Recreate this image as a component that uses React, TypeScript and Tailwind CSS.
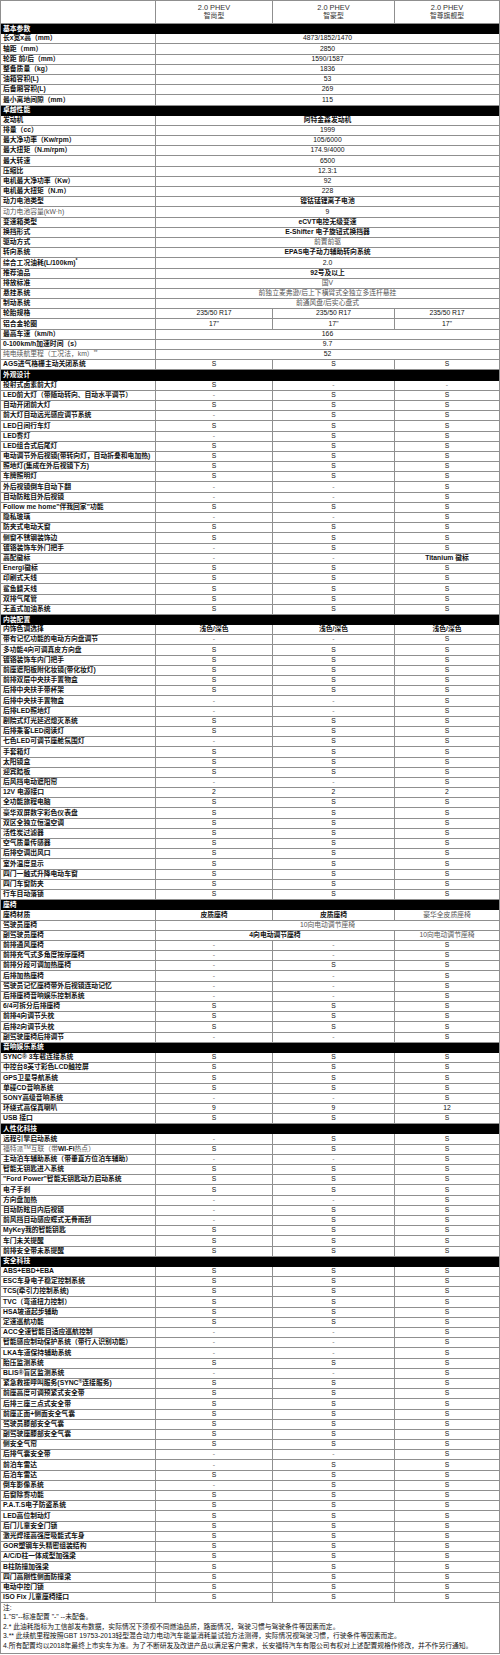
import type { ReactNode } from "react";

type Cell = { text: ReactNode; span: 1 | 2 | 3; light?: boolean };
type Entry =
  | { kind: "sec"; title: string }
  | { kind: "row"; label: ReactNode; cells: Cell[]; lightLabel?: boolean };

const sec = (title: string): Entry => ({ kind: "sec", title });

const all = (label: ReactNode, text: string, opts: { ll?: boolean; lv?: boolean } = {}): Entry => ({
  kind: "row",
  label,
  lightLabel: opts.ll,
  cells: [{ text, span: 3, light: opts.lv }],
});

const three = (label: ReactNode, a: string, b: string, c: string, light3 = false): Entry => ({
  kind: "row",
  label,
  cells: [
    { text: a, span: 1 },
    { text: b, span: 1 },
    { text: c, span: 1, light: light3 },
  ],
});

// "S-S" style shorthand for the S / - columns
const f = (label: ReactNode, p: string, ll = false): Entry => ({
  kind: "row",
  label,
  lightLabel: ll,
  cells: p.split("").map((ch) => ({ text: ch, span: 1 as const })),
});

const rows: Entry[] = [
  sec("基本参数"),
  all("长x宽x高（mm）", "4873/1852/1470"),
  all("轴距（mm）", "2850"),
  all("轮距 前/后（mm）", "1590/1587"),
  all("整备质量（kg）", "1836"),
  all("油箱容积(L)", "53"),
  all("后备厢容积(L)", "269"),
  all("最小离地间隙（mm）", "115"),
  sec("卓越性能"),
  all("发动机", "阿特金森发动机"),
  all("排量（cc）", "1999"),
  all("最大净功率（Kw/rpm）", "105/6000"),
  all("最大扭矩（N.m/rpm）", "174.9/4000"),
  all("最大转速", "6500"),
  all("压缩比", "12.3:1"),
  all("电机最大净功率（Kw）", "92"),
  all("电机最大扭矩（N.m）", "228"),
  all("动力电池类型", "镍钴锰锂离子电池"),
  all("动力电池容量(kW·h)", "9", { ll: true }),
  all("变速箱类型", "eCVT电控无级变速"),
  all("换挡形式", "E-Shifter 电子旋钮式换挡器"),
  all("驱动方式", "前置前驱", { lv: true }),
  all("转向系统", "EPAS电子动力辅助转向系统"),
  all(
    <>
      综合工况油耗(L/100km)<sup>*</sup>
    </>,
    "2.0",
  ),
  all("推荐油品", "92号及以上"),
  all("排放标准", "国V", { lv: true }),
  all("悬挂系统", "前独立麦弗逊/后上下横臂式全独立多连杆悬挂", { lv: true }),
  all("制动系统", "前通风盘/后实心盘式", { lv: true }),
  three("轮胎规格", "235/50 R17", "235/50 R17", "235/50 R17"),
  three("铝合金轮圈", "17''", "17''", "17''"),
  all("最高车速（km/h）", "166"),
  all("0-100km/h加速时间（s）", "9.7"),
  all(
    <>
      纯电续航里程（工况法，km）<sup>**</sup>
    </>,
    "52",
    { ll: true },
  ),
  f("AGS进气格栅主动关闭系统", "SSS"),
  sec("外观设计"),
  f("投射式卤素前大灯", "S--"),
  f("LED前大灯（带随动转向、自动水平调节）", "-SS"),
  f("自动开闭前大灯", "SSS"),
  f("前大灯自动远光感应调节系统", "-SS"),
  f("LED日间行车灯", "SSS"),
  f("LED雾灯", "-SS"),
  f("LED组合式后尾灯", "SSS"),
  f("电动调节外后视镜(带转向灯，自动折叠和电加热)", "SSS"),
  f("照地灯(集成在外后视镜下方)", "SSS"),
  f("车牌照明灯", "SSS"),
  f("外后视镜倒车自动下翻", "--S"),
  f("自动防眩目外后视镜", "--S"),
  f("Follow me home\"伴我回家\"功能", "SSS"),
  f("隐私玻璃", "--S"),
  f("防夹式电动天窗", "SSS"),
  f("侧窗不锈钢装饰边", "SSS"),
  f("镀铬装饰车外门把手", "-SS"),
  three("高配徽标", "-", "-", "Titanium 徽标"),
  f("Energi徽标", "SSS"),
  f("印刷式天线", "SSS"),
  f("鲨鱼鳍天线", "SSS"),
  f("双排气尾管", "SSS"),
  f("无盖式加油系统", "SSS"),
  sec("内装配置"),
  three("内饰色调选择", "浅色/深色", "浅色/深色", "浅色/深色"),
  f("带有记忆功能的电动方向盘调节", "--S"),
  f("多功能4向可调真皮方向盘", "SSS"),
  f("镀铬装饰车内门把手", "SSS"),
  f("前座遮阳板附化妆镜(带化妆灯)", "SSS"),
  f("前排双层中央扶手置物盒", "SSS"),
  f("后排中央扶手带杯架", "SSS"),
  f("后排中央扶手置物盒", "--S"),
  f("后排LED照地灯", "--S"),
  f("剧院式灯光延迟熄灭系统", "SSS"),
  f("后排乘客LED阅读灯", "SSS"),
  f("七色LED可调节座舱氛围灯", "-SS"),
  f("手套箱灯", "SSS"),
  f("太阳镜盒", "SSS"),
  f("迎宾踏板", "SSS"),
  f("后风挡电动遮阳帘", "--S"),
  f("12V 电源接口", "222"),
  f("全功能旅程电脑", "SSS"),
  f("豪华双屏数字彩色仪表盘", "SSS"),
  f("双区全独立恒温空调", "SSS"),
  f("活性炭过滤器", "SSS"),
  f("空气质量传感器", "SSS"),
  f("后排空调出风口", "SSS"),
  f("室外温度显示", "SSS"),
  f("四门一触式升降电动车窗", "SSS"),
  f("四门车窗防夹", "SSS"),
  f("行车自动落锁", "SSS"),
  sec("座椅"),
  three("座椅材质", "皮质座椅", "皮质座椅", "豪华全皮质座椅", true),
  all("驾驶员座椅", "10向电动调节座椅", { lv: true }),
  {
    kind: "row",
    label: "副驾驶员座椅",
    cells: [
      { text: "4向电动调节座椅", span: 2 },
      { text: "10向电动调节座椅", span: 1, light: true },
    ],
  },
  f("前排通风座椅", "--S"),
  f("前排充气式多角度按摩座椅", "--S"),
  f("前排分段可调加热座椅", "-SS"),
  f("后排加热座椅", "--S"),
  f("驾驶员记忆座椅带外后视镜连动记忆", "--S"),
  f("后排座椅音响娱乐控制系统", "--S"),
  f("6/4可拆分后排座椅", "SSS"),
  f("前排4向调节头枕", "SSS"),
  f("后排2向调节头枕", "SSS"),
  f("副驾驶座椅后排调节", "--S"),
  sec("音响娱乐系统"),
  f("SYNC® 3车载连接系统", "SSS"),
  f("中控台8英寸彩色LCD触控屏", "SSS"),
  f("GPS卫星导航系统", "SSS"),
  f("单碟CD音响系统", "SSS"),
  f("SONY高级音响系统", "--S"),
  three("环绕式高保真喇叭", "9", "9", "12"),
  f("USB 接口", "SSS"),
  sec("人性化科技"),
  f("远程引擎启动系统", "-SS"),
  f(
    <>
      福特派<sup>TM</sup>互联（带<span className="font-semibold text-[#111]">WI-Fi</span>热点）
    </>,
    "SSS",
    true,
  ),
  f("主动泊车辅助系统（带垂直方位泊车辅助）", "--S"),
  f("智能无钥匙进入系统", "SSS"),
  f("\"Ford Power\"智能无钥匙动力启动系统", "SSS"),
  f("电子手刹", "SSS"),
  f("方向盘加热", "--S"),
  f("自动防眩目内后视镜", "-SS"),
  f("前风挡自动感应蝶式无骨雨刮", "-SS"),
  f("MyKey我的智能钥匙", "SSS"),
  f("车门未关提醒", "SSS"),
  f("前排安全带未系提醒", "SSS"),
  sec("安全科技"),
  f("ABS+EBD+EBA", "SSS"),
  f("ESC车身电子稳定控制系统", "SSS"),
  f("TCS(牵引力控制系统)", "SSS"),
  f("TVC（弯道扭力控制）", "SSS"),
  f("HSA坡道起步辅助", "SSS"),
  f("定速巡航功能", "SSS"),
  f("ACC全速智能自适应巡航控制", "--S"),
  f("智能感应制动保护系统（带行人识别功能）", "--S"),
  f("LKA车道保持辅助系统", "--S"),
  f("胎压监测系统", "SSS"),
  f("BLIS®盲区监测系统", "--S"),
  f(
    <>
      紧急救援呼叫服务(SYNC<sup>®</sup>连接服务)
    </>,
    "SSS",
  ),
  f("前座高度可调预紧式安全带", "SSS"),
  f("后排三座三点式安全带", "SSS"),
  f("前座正面+侧面安全气囊", "SSS"),
  f("驾驶员膝部安全气囊", "SSS"),
  f("副驾驶座膝部安全气囊", "SSS"),
  f("侧安全气帘", "SSS"),
  f("后排气囊安全带", "--S"),
  f("前泊车雷达", "-SS"),
  f("后泊车雷达", "SSS"),
  f("倒车影像系统", "-SS"),
  f("后窗除雾功能", "SSS"),
  f("P.A.T.S电子防盗系统", "SSS"),
  f("LED高位制动灯", "SSS"),
  f("后门儿童安全门锁", "SSS"),
  f("激光焊接高强度吸能式车身", "SSS"),
  f("GOR塑钢车头精密组装结构", "SSS"),
  f("A/C/D柱一体成型加强梁", "SSS"),
  f("B柱防撞加强梁", "SSS"),
  f("四门高刚性侧面防撞梁", "SSS"),
  f("电动中控门锁", "SSS"),
  f("ISO Fix 儿童座椅接口", "SSS"),
];

const notes = [
  "注:",
  "1.\"S\"--标准配置 \"-\" --未配备。",
  "2.* 此油耗指标为工信部发布数据，实际情况下须视不同燃油品质，路面情况，驾驶习惯与驾驶条件等因素而定。",
  "3.** 此续航里程按照GBT 19753-2013轻型混合动力电动汽车能量消耗量试验方法测得，实际情况视驾驶习惯，行驶条件等因素而定。",
  "4.所有配置均以2018年最终上市实车为准。为了不断研发及改进产品以满足客户需求，长安福特汽车有限公司有权对上述配置规格作修改，并不作另行通知。",
];

const widthFor = (start: number, span: number) => {
  if (start + span === 3) return "flex-1";
  if (start === 0 && span === 1) return "w-[117px] shrink-0 border-r border-[#8f8f8f]";
  if (start === 1 && span === 1) return "w-[122px] shrink-0 border-r border-[#8f8f8f]";
  return "w-[239px] shrink-0 border-r border-[#8f8f8f]";
};

// worded (Chinese) values are set heavier, figures and marks stay regular
const hasCjk = (t: ReactNode) => typeof t === "string" && /[\u4e00-\u9fff]/.test(t);

const DataRow = ({ entry }: { entry: Extract<Entry, { kind: "row" }> }) => {
  let pos = 0;
  return (
    <div className="flex h-[10.2px] border-b border-[#8f8f8f]">
      <div
        className={`flex w-[155px] shrink-0 items-center overflow-hidden whitespace-nowrap border-r border-[#8f8f8f] pl-[2px] ${
          entry.lightLabel ? "font-normal text-[#555]" : "font-semibold text-[#111]"
        }`}
      >
        {entry.label}
      </div>
      {entry.cells.map((c, i) => {
        const cls = widthFor(pos, c.span);
        pos += c.span;
        const tone = c.light
          ? "font-normal text-[#555]"
          : c.text === "-"
            ? "font-normal text-[#777]"
            : hasCjk(c.text)
              ? "font-semibold text-[#111]"
              : "font-normal text-[#111]";
        return (
          <div
            key={i}
            className={`flex items-center justify-center overflow-hidden whitespace-nowrap ${cls} ${tone}`}
          >
            {c.text}
          </div>
        );
      })}
    </div>
  );
};

export default function App() {
  return (
    <div className="w-[500px] bg-white font-['Liberation_Sans','Noto_Sans_CJK_SC',sans-serif] text-[6.8px] leading-none">
      <div className="border-x border-[#8f8f8f]">
        {/* trim columns */}
        <div className="flex h-[24px] border-y border-[#8f8f8f] text-[#333]">
          <div className="w-[155px] shrink-0 border-r border-[#8f8f8f]" />
          {[
            ["智尚型", "w-[117px] shrink-0 border-r border-[#8f8f8f]"],
            ["智豪型", "w-[122px] shrink-0 border-r border-[#8f8f8f]"],
            ["智尊旗舰型", "flex-1"],
          ].map(([name, cls]) => (
            <div key={name} className={`flex flex-col items-center justify-center gap-[2px] ${cls}`}>
              <span className="text-[7.4px]">2.0 PHEV</span>
              <span className="text-[6.8px]">{name}</span>
            </div>
          ))}
        </div>

        {rows.map((r, i) =>
          r.kind === "sec" ? (
            <div
              key={i}
              className="flex h-[10.2px] items-center bg-black pl-[2px] font-bold text-white"
            >
              {r.title}
            </div>
          ) : (
            <DataRow key={i} entry={r} />
          ),
        )}

        <div className="border-b border-[#8f8f8f] px-[2px] pb-[3px] text-[#111]">
          {notes.map((n) => (
            <p key={n} className="whitespace-nowrap leading-[9.4px]">
              {n}
            </p>
          ))}
        </div>
      </div>
    </div>
  );
}
